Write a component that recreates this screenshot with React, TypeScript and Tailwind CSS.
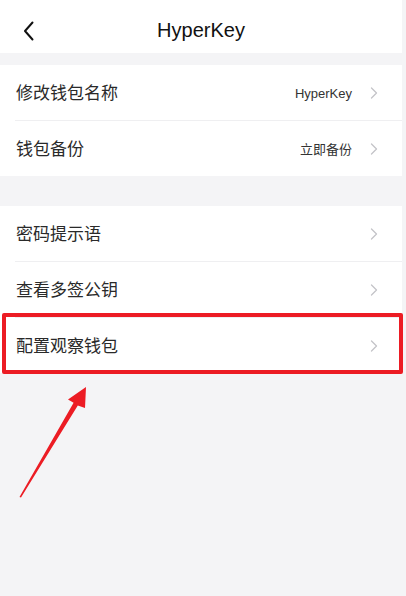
import React from "react";

const FONT = '"Liberation Sans", "Noto Sans CJK SC", sans-serif';

function Chevron() {
  return (
    <svg width="8" height="12" viewBox="0 0 8 12" className="shrink-0">
      <path d="M1.5 1 L6.5 6 L1.5 11" fill="none" stroke="#c4c4c8" strokeWidth="1.3" strokeLinecap="round" strokeLinejoin="round" />
    </svg>
  );
}

function Row({ label, value }: { label: string; value?: string }) {
  return (
    <div className="flex h-[55px] items-center bg-white pl-4 pr-[24px]">
      <span className="mt-[2px] flex-1 text-[17px] text-[#2a2a2a]">{label}</span>
      {value && <span className="mr-[18px] mt-[2px] text-[13px] text-[#333]">{value}</span>}
      <Chevron />
    </div>
  );
}

function Divider() {
  return (
    <div className="bg-white pl-[15px]">
      <div className="h-px bg-[#efeff1]" />
    </div>
  );
}

export default function App() {
  return (
    <div className="relative h-[596px] w-[406px] overflow-hidden bg-[#f4f4f6] pr-[4px]" style={{ fontFamily: FONT }}>
      <header className="relative flex h-[53px] items-center justify-center bg-white">
        <svg width="12" height="20" viewBox="0 0 12 20" className="absolute left-[23px] top-[21px]">
          <path d="M9.5 1.5 L2 10 L9.5 18.5" fill="none" stroke="#111" strokeWidth="2" strokeLinecap="round" strokeLinejoin="round" />
        </svg>
        <h1 className="mt-[6px] text-[20px] text-[#111]">HyperKey</h1>
      </header>

      <section className="mt-[12px] flex flex-col">
        <Row label="修改钱包名称" value="HyperKey" />
        <Divider />
        <Row label="钱包备份" value="立即备份" />
      </section>

      <section className="mt-[30px] flex flex-col">
        <Row label="密码提示语" />
        <Divider />
        <Row label="查看多签公钥" />
        <Divider />
        <Row label="配置观察钱包" />
      </section>

      {/* highlight frame around the last row */}
      <div className="pointer-events-none absolute left-[2px] top-[313px] h-[61px] w-[401px] rounded-[2px] border-[4px] border-[#ec1c24]" />

      {/* pointer arrow */}
      <svg className="pointer-events-none absolute left-0 top-0" width="406" height="596" viewBox="0 0 406 596">
        <polygon
          points="19.5,497 73.6,402.8 68,399.5 86,387 85,408 77.8,405.4 21,497.5"
          fill="#ec1c24"
        />
      </svg>
    </div>
  );
}
